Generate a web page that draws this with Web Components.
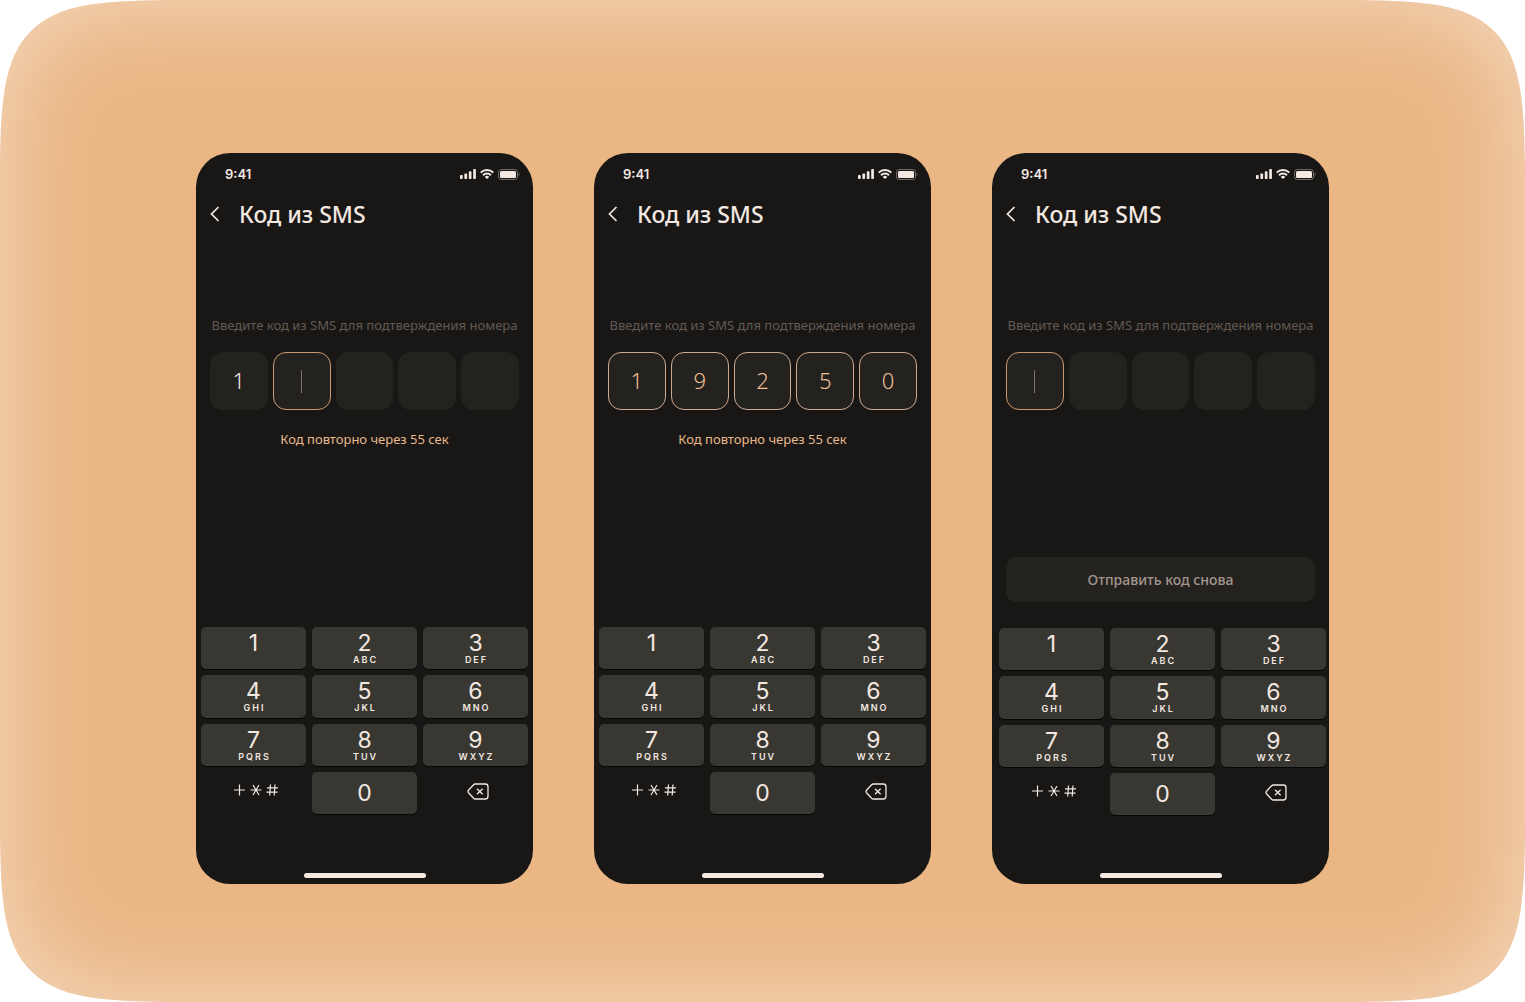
<!DOCTYPE html>
<html lang="ru">
<head>
<meta charset="utf-8">
<meta name="viewport" content="width=device-width, initial-scale=1">
<title>Код из SMS</title>
<style>
  body {
    margin: 0;
    background: #fff;
    font-family: "Noto Sans", "Open Sans", sans-serif;
  }
</style>
</head>
<body>
<showcase-stage>
  <phone-screen>
    <code-form value="1" active="1"></code-form>
    <resend-timer seconds="55"></resend-timer>
    <num-pad slot="bottom"></num-pad>
  </phone-screen>
  <phone-screen>
    <code-form value="19250" complete></code-form>
    <resend-timer seconds="55"></resend-timer>
    <num-pad slot="bottom"></num-pad>
  </phone-screen>
  <phone-screen>
    <code-form active="0"></code-form>
    <resend-button slot="bottom">Отправить код снова</resend-button>
    <num-pad slot="bottom" shifted></num-pad>
  </phone-screen>
</showcase-stage>

<script>
(() => {
  'use strict';

  class ShowcaseStage extends HTMLElement {
    constructor() {
      super();
      const corner = '<path d="M0 0H165C100 1 58 4 31 31C4 58 1 100 0 165Z" fill="#fff"/>';
      this.attachShadow({ mode: 'open' }).innerHTML = `
  <style>
  :host {
    box-sizing: border-box;
    position: relative;
    display: block;
    min-height: 100vh;
    padding: 153px 24px 118px;
    background-color: #eab684;
  }

  .glow {
    position: absolute;
    inset: 0;
    border-radius: 110px;
    box-shadow: inset 0 0 100px rgba(255, 255, 255, .5), 0 0 0 60px #f1caa5;
    clip-path: inset(0);
  }

  .corner {
    position: absolute;
    width: 165px;
    height: 165px;
  }

  .tl { top: 0; left: 0; }
  .tr { top: 0; right: 0; transform: scaleX(-1); }
  .bl { bottom: 0; left: 0; transform: scaleY(-1); }
  .br { bottom: 0; right: 0; transform: scale(-1); }

  .row {
    position: relative;
    display: flex;
    flex-wrap: wrap;
    justify-content: center;
    gap: 61px;
  }
  </style>
  <div class="glow"></div>
  <svg class="corner tl" viewBox="0 0 165 165" aria-hidden="true">${corner}</svg>
  <svg class="corner tr" viewBox="0 0 165 165" aria-hidden="true">${corner}</svg>
  <svg class="corner bl" viewBox="0 0 165 165" aria-hidden="true">${corner}</svg>
  <svg class="corner br" viewBox="0 0 165 165" aria-hidden="true">${corner}</svg>
  <div class="row"><slot></slot></div>
  `;
    }
  }

  class StatusBar extends HTMLElement {
    constructor() {
      super();
      this.attachShadow({ mode: 'open' }).innerHTML = `
  <style>
  :host {
    display: flex;
    justify-content: space-between;
    align-items: center;
    height: 20px;
    padding: 11px 13px 0 29px;
    font: 600 13px/20px Inter, sans-serif;
  }

  .icons {
    display: flex;
    align-items: center;
    gap: 4px;
  }

  svg {
    display: block;
  }
  </style>
  <span>9:41</span>
  <span class="icons">
   <svg width="16" height="10" viewBox="0 0 16 10" fill="currentColor" aria-hidden="true">
    <rect x="0" y="6" width="2.7" height="4" rx=".8"/>
    <rect x="4.4" y="4.4" width="2.7" height="5.6" rx=".8"/>
    <rect x="8.8" y="2.3" width="2.7" height="7.7" rx=".8"/>
    <rect x="13.2" y="0" width="2.7" height="10" rx=".8"/>
   </svg>
   <svg width="14" height="10" viewBox="0 0 14 10" fill="none" stroke="currentColor" stroke-width="2" aria-hidden="true">
    <path d="M.7 3.6a9 9 0 0 1 12.6 0M3 6.2a5.8 5.8 0 0 1 8 0"/>
    <path d="M7 10L4.8 7.9a3.2 3.2 0 0 1 4.4 0Z" fill="currentColor" stroke="none"/>
   </svg>
   <svg width="22" height="11" viewBox="0 0 22 11" fill="none" aria-hidden="true">
    <rect x=".5" y=".5" width="19" height="10" rx="2.8" stroke="currentColor" opacity=".4"/>
    <rect x="2" y="2" width="16" height="7" rx="1.5" fill="currentColor"/>
    <path d="M20.6 3.6c1.3.5 1.3 3.3 0 3.8Z" fill="currentColor" opacity=".4"/>
   </svg>
  </span>
  `;
    }
  }

  class PhoneScreen extends HTMLElement {
    constructor() {
      super();
      this.attachShadow({ mode: 'open' }).innerHTML = `
  <style>
  :host {
    box-sizing: border-box;
    display: flex;
    flex-direction: column;
    width: 337px;
    min-height: 731px;
    border-radius: 34px;
    overflow: hidden;
    color: #f3e9e2;
    background-color: #191715;
  }

  header {
    display: flex;
    align-items: center;
    gap: 14px;
    padding: 15px 12px 0;
  }

  .back {
    display: flex;
    padding: 0;
    border: 0;
    color: inherit;
    background: none;
    cursor: pointer;
  }

  h1 {
    margin: 0;
    font-size: 23px;
    line-height: 30px;
    font-weight: 500;
  }

  main {
    flex: 1;
    padding: 86px 14px 0;
  }

  .home {
    align-self: center;
    width: 122px;
    height: 5px;
    margin: 0 0 6px;
    border-radius: 3px;
    background-color: currentColor;
  }
  </style>
  <status-bar></status-bar>
  <header>
   <button class="back" type="button" aria-label="Назад">
    <svg width="17" height="16" viewBox="0 0 17 16" fill="none" stroke="currentColor" stroke-width="1.7" aria-hidden="true">
     <path d="M10.5 1L3.5 8L10.5 15"/>
    </svg>
   </button>
   <h1>Код из SMS</h1>
  </header>
  <main><slot></slot></main>
  <slot name="bottom"></slot>
  <div class="home"></div>
  `;
    }
  }

  class CodeForm extends HTMLElement {
    connectedCallback() {
      const value = this.getAttribute('value') || '';
      const active = Number(this.getAttribute('active') ?? -1);
      let cells = '';
      for (let i = 0; i < 5; i++) {
        cells += `<input inputmode="numeric" maxlength="1" aria-label="Цифра ${i + 1}"
          value="${value[i] || ''}"${i === active ? ' class="active"' : ''}>`;
      }
      this.attachShadow({ mode: 'open' }).innerHTML = `
  <style>
  :host {
    display: block;
  }

  fieldset {
    display: grid;
    grid-template-columns: repeat(5, 1fr);
    gap: 5px;
    min-width: 0;
    margin: 0;
    padding: 0;
    border: 0;
  }

  legend {
    width: 100%;
    margin-bottom: 17px;
    padding: 0;
    text-align: center;
    white-space: nowrap;
    font-size: 13px;
    line-height: 20px;
    color: #635a53;
  }

  input {
    box-sizing: border-box;
    width: 100%;
    height: 58px;
    padding: 0 0 2px;
    border: 1px solid transparent;
    border-radius: 13px;
    outline: 0;
    text-align: center;
    font: 300 22px/30px "Noto Sans", sans-serif;
    color: #f3e9e2;
    background-color: #24221f;
  }

  input.active {
    border-color: #c79a72;
    background-image: linear-gradient(#86705f, #86705f);
    background-position: center;
    background-size: 1px 23px;
    background-repeat: no-repeat;
  }

  :host([complete]) input {
    border-color: #cda990;
    color: #efbf93;
  }
  </style>
  <fieldset>
   <legend>Введите код из SMS для подтверждения номера</legend>
   ${cells}
  </fieldset>
  `;
    }
  }

  class ResendTimer extends HTMLElement {
    connectedCallback() {
      this.attachShadow({ mode: 'open' }).innerHTML = `
  <style>
  :host {
    display: block;
    margin-top: 19px;
    text-align: center;
    font-size: 13px;
    line-height: 20px;
    color: #e9b98d;
  }
  </style>
  <span>Код повторно через ${this.getAttribute('seconds')} сек</span>
  `;
    }
  }

  class ResendButton extends HTMLElement {
    constructor() {
      super();
      this.attachShadow({ mode: 'open' }).innerHTML = `
  <style>
  :host {
    display: block;
    padding: 0 14px 26px;
  }

  button {
    width: 100%;
    height: 45px;
    padding: 0;
    border: 0;
    border-radius: 10px;
    font: 500 14px/20px "Noto Sans", sans-serif;
    color: #a3968d;
    background-color: #24221f;
  }
  </style>
  <button type="button"><slot></slot></button>
  `;
    }
  }

  class NumPad extends HTMLElement {
    constructor() {
      super();
      const letters = ['', 'ABC', 'DEF', 'GHI', 'JKL', 'MNO', 'PQRS', 'TUV', 'WXYZ'];
      const keys = letters.map((text, i) =>
        `<button class="key" type="button"><span class="digit">${i + 1}</span><span class="letters">${text}</span></button>`
      ).join('');
      this.attachShadow({ mode: 'open' }).innerHTML = `
  <style>
  :host {
    display: grid;
    grid-template-columns: repeat(3, 1fr);
    grid-template-rows: repeat(4, 1fr);
    gap: 6px;
    height: 187px;
    padding: 0 5px 59px;
  }

  :host([shifted]) {
    padding: 0 3px 58px 7px;
  }

  button {
    display: flex;
    flex-direction: column;
    align-items: center;
    justify-content: center;
    padding: 0 0 2px 4px;
    border: 0;
    border-radius: 5px;
    font-family: Inter, sans-serif;
    color: inherit;
    background: none;
  }

  .key {
    padding: 0;
    background-color: #393731;
    box-shadow: 0 1px 0 #050505;
  }

  .digit {
    font-size: 23px;
    line-height: 24px;
    font-weight: 400;
  }

  .letters {
    height: 10px;
    padding-left: 2px;
    font-size: 9px;
    line-height: 10px;
    font-weight: 600;
    letter-spacing: 2px;
  }
  </style>
  ${keys}
  <button type="button" aria-label="Символы">
   <svg width="46" height="16" viewBox="0 0 46 16" fill="none" stroke="currentColor" stroke-width="1.2" aria-hidden="true">
    <path d="M1 6H12M6.5 .5V11.5"/>
    <path d="M17.5 6H28.5M20 1L26 11M26 1L20 11"/>
    <path d="M34 3.8H45M33.5 8.2H44.5M37.5 .5L36.7 11.5M42 .5L41.2 11.5"/>
   </svg>
  </button>
  <button class="key" type="button"><span class="digit">0</span></button>
  <button type="button" aria-label="Удалить">
   <svg width="22" height="17" viewBox="0 0 22 17" fill="none" stroke="currentColor" stroke-width="1.3" aria-hidden="true">
    <path d="M8.2 1H18.3Q21 1 21 3.7V13.3Q21 16 18.3 16H8.2Q7.3 16 6.6 15.3L1.5 9.7Q.5 8.5 1.5 7.3L6.6 1.7Q7.3 1 8.2 1Z"/>
    <path d="M10 5.7L15.6 11.3M15.6 5.7L10 11.3"/>
   </svg>
  </button>
  `;
    }
  }

  customElements.define('showcase-stage', ShowcaseStage);
  customElements.define('status-bar', StatusBar);
  customElements.define('phone-screen', PhoneScreen);
  customElements.define('code-form', CodeForm);
  customElements.define('resend-timer', ResendTimer);
  customElements.define('resend-button', ResendButton);
  customElements.define('num-pad', NumPad);
})();
</script>
</body>
</html>
